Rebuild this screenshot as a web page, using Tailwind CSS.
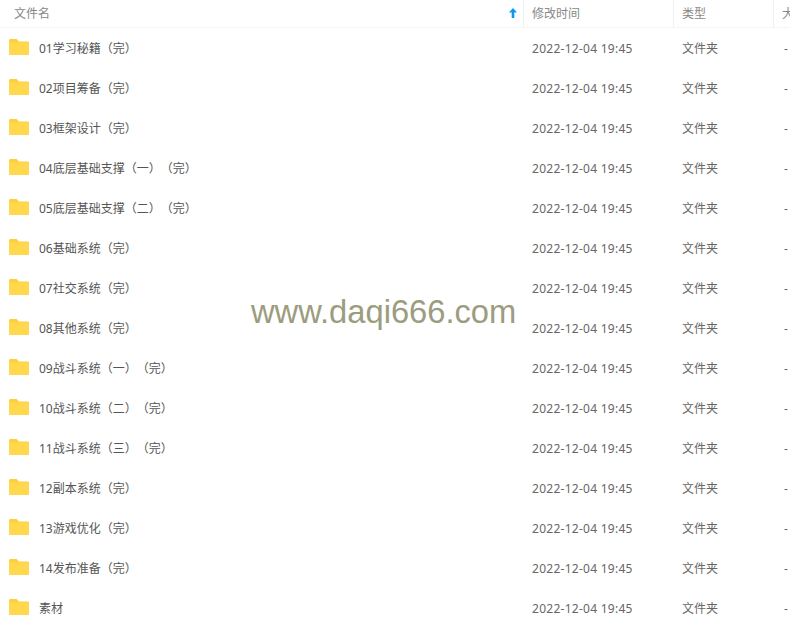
<!DOCTYPE html>
<html><head><meta charset="utf-8"><script src="https://cdn.jsdelivr.net/npm/@tailwindcss/browser@4"></script></head>
<body class="bg-white">
<svg class="hidden"><defs><symbol id="f" viewBox="0 0 20 16"><path d="M1.2 0H7.6L10 2.4H18.6A1.4 1.4 0 0 1 20 3.8V14.6A1.4 1.4 0 0 1 18.6 16H1.4A1.4 1.4 0 0 1 0 14.6V1.2A1.2 1.2 0 0 1 1.2 0Z" fill="#fdd03c"/><path d="M0 3.6H20V14.6A1.4 1.4 0 0 1 18.6 16H1.4A1.4 1.4 0 0 1 0 14.6Z" fill="#ffd84e"/></symbol></defs></svg>
<div class="relative w-[790px] h-[627px] overflow-hidden text-[12px] font-['Noto_Sans','Noto_Sans_CJK_SC',sans-serif] text-[#666]">
<div class="grid grid-cols-[524px_150px_100px_16px] h-[28px] items-center border-b border-[#f5f5f6] text-[#888]">
<div class="relative h-full flex items-center pl-[14px] border-r border-[#f0f0f1]">文件名<svg class="absolute left-[509px] top-[8px]" width="8" height="10" viewBox="0 0 8 10"><path d="M4 0L8 4.6H5.3V10H2.7V4.6H0Z" fill="#0b98f0"/></svg></div>
<div class="h-full flex items-center pl-[8px] border-r border-[#f0f0f1]">修改时间</div>
<div class="h-full flex items-center pl-[8px] border-r border-[#f0f0f1]">类型</div>
<div class="h-full flex items-center pl-[8px] whitespace-nowrap overflow-hidden w-[16px]">大小</div>
</div>
<div class="grid grid-cols-[524px_150px_100px_16px] auto-rows-[40px] items-center pt-px">
<div class="flex items-center pl-[9px]"><svg class="w-[20px] h-[16px] mr-[10px] -mt-[4px]"><use href="#f"/></svg><span class="text-[#555]">01学习秘籍（完）</span></div><div class="pl-[8px] tracking-[0.27px]">2022-12-04 19:45</div><div class="pl-[8px]">文件夹</div><div class="pl-[10px]">-</div>
<div class="flex items-center pl-[9px]"><svg class="w-[20px] h-[16px] mr-[10px] -mt-[4px]"><use href="#f"/></svg><span class="text-[#555]">02项目筹备（完）</span></div><div class="pl-[8px] tracking-[0.27px]">2022-12-04 19:45</div><div class="pl-[8px]">文件夹</div><div class="pl-[10px]">-</div>
<div class="flex items-center pl-[9px]"><svg class="w-[20px] h-[16px] mr-[10px] -mt-[4px]"><use href="#f"/></svg><span class="text-[#555]">03框架设计（完）</span></div><div class="pl-[8px] tracking-[0.27px]">2022-12-04 19:45</div><div class="pl-[8px]">文件夹</div><div class="pl-[10px]">-</div>
<div class="flex items-center pl-[9px]"><svg class="w-[20px] h-[16px] mr-[10px] -mt-[4px]"><use href="#f"/></svg><span class="text-[#555]">04底层基础支撑（一）<span class="tracking-[-3px]">&nbsp;</span>（完）</span></div><div class="pl-[8px] tracking-[0.27px]">2022-12-04 19:45</div><div class="pl-[8px]">文件夹</div><div class="pl-[10px]">-</div>
<div class="flex items-center pl-[9px]"><svg class="w-[20px] h-[16px] mr-[10px] -mt-[4px]"><use href="#f"/></svg><span class="text-[#555]">05底层基础支撑（二）<span class="tracking-[-3px]">&nbsp;</span>（完）</span></div><div class="pl-[8px] tracking-[0.27px]">2022-12-04 19:45</div><div class="pl-[8px]">文件夹</div><div class="pl-[10px]">-</div>
<div class="flex items-center pl-[9px]"><svg class="w-[20px] h-[16px] mr-[10px] -mt-[4px]"><use href="#f"/></svg><span class="text-[#555]">06基础系统（完）</span></div><div class="pl-[8px] tracking-[0.27px]">2022-12-04 19:45</div><div class="pl-[8px]">文件夹</div><div class="pl-[10px]">-</div>
<div class="flex items-center pl-[9px]"><svg class="w-[20px] h-[16px] mr-[10px] -mt-[4px]"><use href="#f"/></svg><span class="text-[#555]">07社交系统（完）</span></div><div class="pl-[8px] tracking-[0.27px]">2022-12-04 19:45</div><div class="pl-[8px]">文件夹</div><div class="pl-[10px]">-</div>
<div class="flex items-center pl-[9px]"><svg class="w-[20px] h-[16px] mr-[10px] -mt-[4px]"><use href="#f"/></svg><span class="text-[#555]">08其他系统（完）</span></div><div class="pl-[8px] tracking-[0.27px]">2022-12-04 19:45</div><div class="pl-[8px]">文件夹</div><div class="pl-[10px]">-</div>
<div class="flex items-center pl-[9px]"><svg class="w-[20px] h-[16px] mr-[10px] -mt-[4px]"><use href="#f"/></svg><span class="text-[#555]">09战斗系统（一）<span class="tracking-[-3px]">&nbsp;</span>（完）</span></div><div class="pl-[8px] tracking-[0.27px]">2022-12-04 19:45</div><div class="pl-[8px]">文件夹</div><div class="pl-[10px]">-</div>
<div class="flex items-center pl-[9px]"><svg class="w-[20px] h-[16px] mr-[10px] -mt-[4px]"><use href="#f"/></svg><span class="text-[#555]">10战斗系统（二）<span class="tracking-[-3px]">&nbsp;</span>（完）</span></div><div class="pl-[8px] tracking-[0.27px]">2022-12-04 19:45</div><div class="pl-[8px]">文件夹</div><div class="pl-[10px]">-</div>
<div class="flex items-center pl-[9px]"><svg class="w-[20px] h-[16px] mr-[10px] -mt-[4px]"><use href="#f"/></svg><span class="text-[#555]">11战斗系统（三）<span class="tracking-[-3px]">&nbsp;</span>（完）</span></div><div class="pl-[8px] tracking-[0.27px]">2022-12-04 19:45</div><div class="pl-[8px]">文件夹</div><div class="pl-[10px]">-</div>
<div class="flex items-center pl-[9px]"><svg class="w-[20px] h-[16px] mr-[10px] -mt-[4px]"><use href="#f"/></svg><span class="text-[#555]">12副本系统（完）</span></div><div class="pl-[8px] tracking-[0.27px]">2022-12-04 19:45</div><div class="pl-[8px]">文件夹</div><div class="pl-[10px]">-</div>
<div class="flex items-center pl-[9px]"><svg class="w-[20px] h-[16px] mr-[10px] -mt-[4px]"><use href="#f"/></svg><span class="text-[#555]">13游戏优化（完）</span></div><div class="pl-[8px] tracking-[0.27px]">2022-12-04 19:45</div><div class="pl-[8px]">文件夹</div><div class="pl-[10px]">-</div>
<div class="flex items-center pl-[9px]"><svg class="w-[20px] h-[16px] mr-[10px] -mt-[4px]"><use href="#f"/></svg><span class="text-[#555]">14发布准备（完）</span></div><div class="pl-[8px] tracking-[0.27px]">2022-12-04 19:45</div><div class="pl-[8px]">文件夹</div><div class="pl-[10px]">-</div>
<div class="flex items-center pl-[9px]"><svg class="w-[20px] h-[16px] mr-[10px] -mt-[4px]"><use href="#f"/></svg><span class="text-[#555]">素材</span></div><div class="pl-[8px] tracking-[0.27px]">2022-12-04 19:45</div><div class="pl-[8px]">文件夹</div><div class="pl-[10px]">-</div>
</div>
<div class="absolute left-[251px] top-[294px] text-[32.7px] leading-[36px] font-['Liberation_Sans',sans-serif] text-[#9c9c7e] whitespace-nowrap">www.daqi666.com</div>
</div>
</body></html>
